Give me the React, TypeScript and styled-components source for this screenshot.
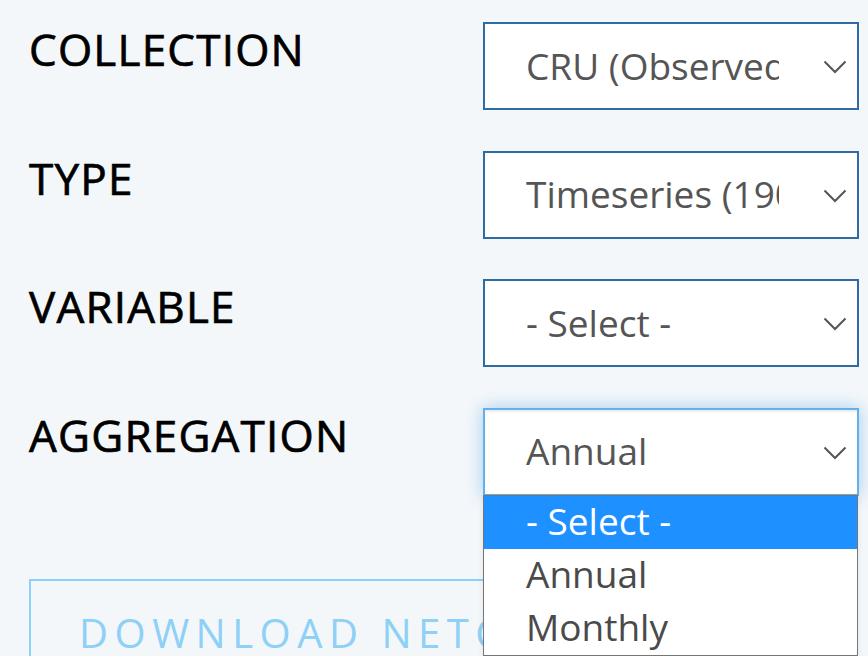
import React from "react";
import styled, { createGlobalStyle, css } from "styled-components";

const Global = createGlobalStyle`
  html, body { margin: 0; padding: 0; background: #f4f7fa; }
  body { font-family: "Open Sans", "Liberation Sans", sans-serif; overflow: hidden; }
`;

const Page = styled.div`
  width: 868px;
  height: 656px;
  box-sizing: border-box;
  padding: 22px 0 0 29px;
  overflow: hidden;
  background: #f4f7fa;
`;

const Form = styled.div`
  display: grid;
  grid-template-columns: 454px 376px;
  row-gap: 40.5px;
`;

const Label = styled.div`
  font-size: 44px;
  line-height: 44px;
  font-weight: 400;
  letter-spacing: 1.2px;
  color: #000;
  -webkit-text-stroke: 0.7px #000;
  padding-top: 5px;
`;

const SelectWrap = styled.div`
  position: relative;
`;

const SelectBox = styled.div<{ $focused?: boolean }>`
  box-sizing: border-box;
  height: 88px;
  display: flex;
  align-items: center;
  background: #fff;
  border: 2px solid #2f6ca6;
  padding: 0 78px 0 41px;
  color: #555;
  font-size: 37px;
  line-height: 1.36;
  ${(p) =>
    p.$focused &&
    css`
      border-color: #66afe9;
      box-shadow: inset 0 2px 2px rgba(0, 0, 0, 0.075), 0 0 16px rgba(102, 175, 233, 0.6);
    `}
`;

const SelectText = styled.span`
  display: block;
  white-space: nowrap;
  overflow: hidden;
  width: 100%;
`;

const Chevron = styled.svg`
  position: absolute;
  right: 12px;
  top: 50%;
  width: 24px;
  height: 14px;
  margin-top: -6px;
`;

const Dropdown = styled.div`
  position: absolute;
  left: 0;
  top: 87px;
  width: 375px;
  box-sizing: border-box;
  border: 1px solid #767676;
  background: #fff;
  z-index: 5;
  box-shadow: 0 2px 6px rgba(0, 0, 0, 0.08);
`;

const Option = styled.div<{ $active?: boolean }>`
  height: 53px;
  display: flex;
  align-items: center;
  padding-left: 42px;
  font-size: 37px;
  line-height: 1;
  padding-bottom: 4px;
  box-sizing: border-box;
  color: ${(p) => (p.$active ? "#fff" : "#4a4a4a")};
  background: ${(p) => (p.$active ? "#1e90ff" : "#fff")};
`;

const Button = styled.div`
  margin-top: 83px;
  width: 587px;
  box-sizing: border-box;
  border: 2px solid #8ed0f6;
  padding: 24px 0 30px 48px;
  font-size: 40px;
  line-height: 56px;
  letter-spacing: 6.5px;
  color: #8ed0f6;
  white-space: nowrap;
  overflow: hidden;
`;

const ChevronIcon = () => (
  <Chevron viewBox="0 0 24 14">
    <path d="M1.5 1.5 L12 12 L22.5 1.5" fill="none" stroke="#555" strokeWidth="2" />
  </Chevron>
);

type Field = { label: string; value: string; focused?: boolean; open?: boolean };

const fields: Field[] = [
  { label: "COLLECTION", value: "CRU (Observed)" },
  { label: "TYPE", value: "Timeseries (1901-2022)" },
  { label: "VARIABLE", value: "- Select -" },
  { label: "AGGREGATION", value: "Annual", focused: true, open: true },
];

export default function App() {
  return (
    <>
      <Global />
      <Page>
        <Form>
          {fields.map((f) => (
            <React.Fragment key={f.label}>
              <Label>{f.label}</Label>
              <SelectWrap>
                <SelectBox $focused={f.focused}>
                  <SelectText>{f.value}</SelectText>
                </SelectBox>
                <ChevronIcon />
                {f.open && (
                  <Dropdown>
                    <Option $active>- Select -</Option>
                    <Option>Annual</Option>
                    <Option>Monthly</Option>
                  </Dropdown>
                )}
              </SelectWrap>
            </React.Fragment>
          ))}
        </Form>
        <Button>DOWNLOAD NETCDF</Button>
      </Page>
    </>
  );
}
